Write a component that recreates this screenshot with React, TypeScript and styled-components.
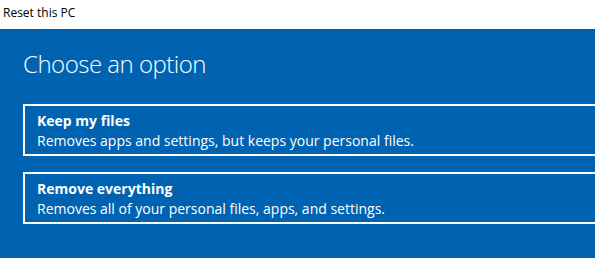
import React from "react";
import styled, { createGlobalStyle } from "styled-components";

const Global = createGlobalStyle`
  html, body { margin: 0; padding: 0; overflow: hidden; }
  body { width: 595px; height: 258px; background: #0063b1; }
`;

const Window = styled.div`
  width: 595px;
  height: 258px;
  display: flex;
  flex-direction: column;
  overflow: hidden;
  font-family: "Open Sans", "Noto Sans", sans-serif;
`;

const TitleBar = styled.div`
  height: 29px;
  flex: none;
  background: #ffffff;
  color: #000000;
  font-size: 12px;
  line-height: 12px;
  padding: 7px 0 0 3px;
  box-sizing: border-box;
`;

const Content = styled.div`
  flex: 1;
  background: #0063b1;
  color: #ffffff;
  padding: 18px 0 0 23px;
  display: flex;
  flex-direction: column;
`;

const Heading = styled.h1`
  margin: 0 0 23px;
  font-weight: 300;
  font-size: 24px;
  letter-spacing: -0.5px;
  line-height: 34px;
`;

const Options = styled.div`
  display: flex;
  flex-direction: column;
  gap: 16px;
`;

const Option = styled.button`
  width: 620px;
  height: 52px;
  box-sizing: border-box;
  border: 2px solid #ffffff;
  background: transparent;
  color: #ffffff;
  text-align: left;
  padding: 5px 0 0 12px;
  font-family: inherit;
  display: flex;
  flex-direction: column;
  cursor: pointer;
`;

const OptionTitle = styled.span`
  font-size: 14px;
  font-weight: 700;
  line-height: 20px;
`;

const OptionText = styled.span`
  font-size: 14px;
  line-height: 20px;
`;

const options = [
  { title: "Keep my files", text: "Removes apps and settings, but keeps your personal files." },
  { title: "Remove everything", text: "Removes all of your personal files, apps, and settings." },
];

export default function App() {
  return (
    <>
      <Global />
      <Window>
        <TitleBar>Reset this PC</TitleBar>
        <Content>
          <Heading>Choose an option</Heading>
          <Options>
            {options.map((o) => (
              <Option key={o.title}>
                <OptionTitle>{o.title}</OptionTitle>
                <OptionText>{o.text}</OptionText>
              </Option>
            ))}
          </Options>
        </Content>
      </Window>
    </>
  );
}
